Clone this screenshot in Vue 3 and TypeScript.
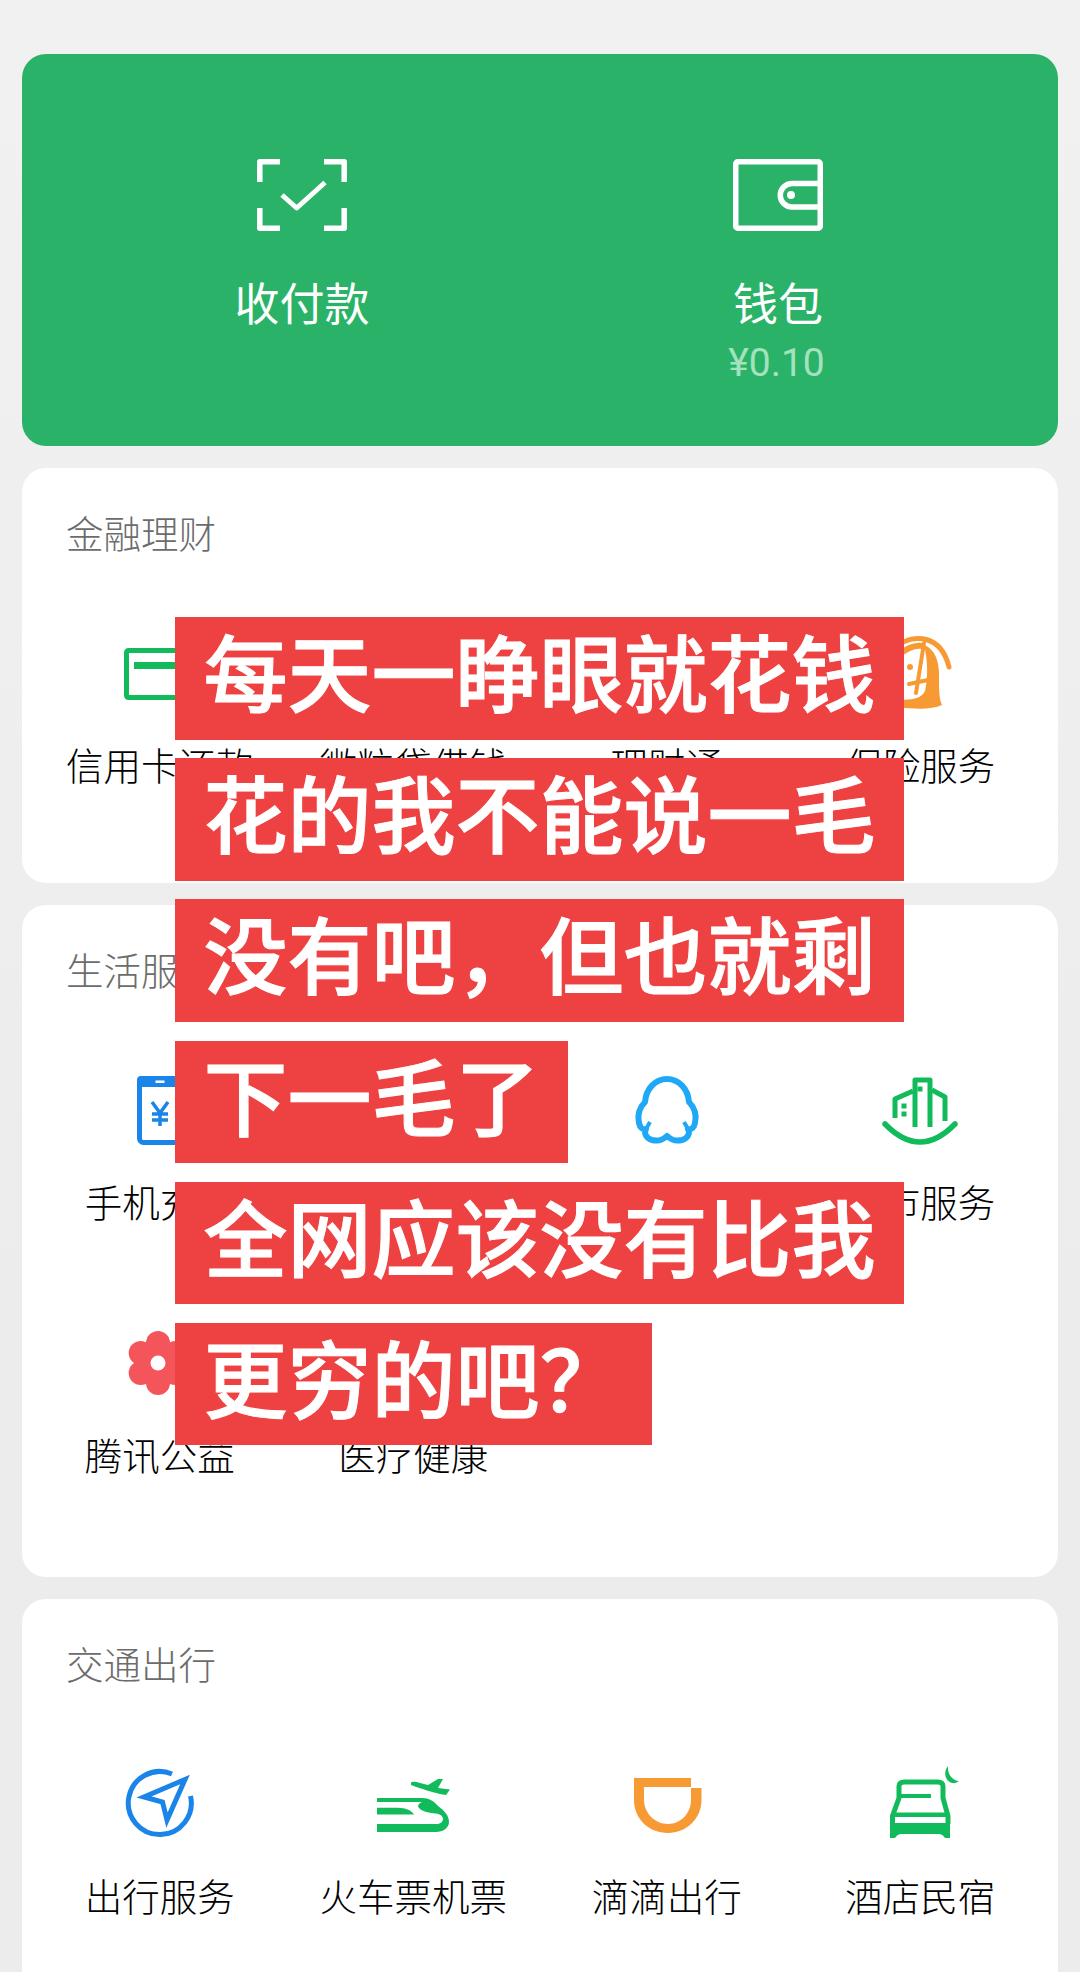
<script setup lang="ts">
interface Item {
  label: string
  icon?: string
}

interface Group {
  title: string
  mod: string
  items: Item[]
}

const groups: Group[] = [
  {
    title: '金融理财',
    mod: 'finance',
    items: [
      { label: '信用卡还款', icon: 'card' },
      { label: '微粒贷借钱' },
      { label: '理财通' },
      { label: '保险服务', icon: 'insure' },
    ],
  },
  {
    title: '生活服务',
    mod: 'life',
    items: [
      { label: '手机充值', icon: 'phone' },
      { label: '生活缴费' },
      { label: 'Q币充值', icon: 'qq' },
      { label: '城市服务', icon: 'city' },
      { label: '腾讯公益', icon: 'flower' },
      { label: '医疗健康' },
    ],
  },
  {
    title: '交通出行',
    mod: 'travel',
    items: [
      { label: '出行服务', icon: 'nav' },
      { label: '火车票机票', icon: 'train' },
      { label: '滴滴出行', icon: 'didi' },
      { label: '酒店民宿', icon: 'bed' },
    ],
  },
]

const captions: string[] = [
  '每天一睁眼就花钱',
  '花的我不能说一毛',
  '没有吧\uFF0C但也就剩',
  '下一毛了',
  '全网应该没有比我',
  '更穷的吧\uFF1F',
]
</script>

<template>
  <div class="page">
    <section class="hero">
      <div class="hero-col">
        <svg class="hero-icon" viewBox="0 0 90 72" fill="none" stroke="#fff" stroke-width="5.5" stroke-linejoin="round">
          <path d="M2.8 23V2.8H23M67 2.8H87.2V23M2.8 49V69.2H23M67 69.2H87.2V49" />
          <path d="M25 36L39.7 49L68 23.5" stroke-width="5" />
        </svg>
        <div class="hero-label">收付款</div>
      </div>
      <div class="hero-col">
        <svg class="hero-icon" viewBox="0 0 90 72" fill="none" stroke="#fff" stroke-width="5.5" stroke-linejoin="round">
          <rect x="2.75" y="2.75" width="84.5" height="66.5" rx="2" />
          <path d="M85 24.5H59A11.75 11.75 0 0 0 59 48H85" />
          <circle cx="58" cy="36" r="4" fill="#fff" stroke="none" />
        </svg>
        <div class="hero-label">钱包</div>
        <div class="hero-amount">¥0.10</div>
      </div>
    </section>

    <section v-for="group in groups" :key="group.title" class="panel" :class="group.mod">
      <h2 class="panel-title">{{ group.title }}</h2>
      <div class="grid">
        <div v-for="item in group.items" :key="item.label" class="cell">
          <svg class="cell-icon" viewBox="0 0 90 80">
            <g v-if="item.icon === 'card'" fill="none" stroke="#11bb5b" stroke-width="5">
              <rect x="11.5" y="17.5" width="67" height="47" rx="2" />
              <path d="M19 32.5H71" stroke-width="7" />
            </g>
            <g v-else-if="item.icon === 'insure'" fill="none" stroke="#f79a33">
              <path d="M24 12C38 1 66 1 74 34" stroke-width="5" stroke-linecap="round" />
              <path d="M24 22Q36 11 48 13" stroke-width="6" />
              <path d="M49 12C60 16 64 28 64 42C64 56 64 66 67 72C56 77 40 76 20 74V66C35 68 46 66 50 58C53 45 53 28 49 12Z" fill="#f79a33" stroke="none" />
              <path d="M49 10L41 60" stroke-width="4" stroke-linecap="round" />
              <path d="M34 51L53 47" stroke-width="4" stroke-linecap="round" />
              <circle cx="35" cy="34" r="3" fill="#f79a33" stroke="none" />
            </g>
            <g v-else-if="item.icon === 'phone'">
              <rect x="24.5" y="8.5" width="41" height="64" rx="4" fill="#fff" stroke="#1a84e8" stroke-width="5" />
              <rect x="22" y="6" width="46" height="11" rx="4" fill="#1a84e8" />
              <rect x="40.5" y="10.5" width="9" height="2.5" fill="#fff" />
              <path d="M37 32L45 43L53 32M45 43V56M37 44H53M37 50H53" fill="none" stroke="#1a84e8" stroke-width="3.5" />
            </g>
            <g v-else-if="item.icon === 'qq'" fill="none" stroke="#1fa8f5" stroke-width="6" stroke-linejoin="round">
              <path d="M45 9C33 9 24 19 23 32C18 37 15 44 17 53C18 58 21 60 24 59C22 62 23 68 30 70C36 71.5 41 70 45 66C49 70 54 71.5 60 70C67 68 68 62 66 59C69 60 72 58 73 53C75 44 72 37 67 32C66 19 57 9 45 9Z" />
              <path d="M24 59L28 52M66 59L62 52" stroke-width="4" />
            </g>
            <g v-else-if="item.icon === 'city'" fill="none" stroke="#11bb5b" stroke-width="5" stroke-linejoin="round">
              <path d="M10 54Q45 90 80 54" stroke-width="5.5" stroke-linecap="round" />
              <path d="M40 57V10H55V57" />
              <path d="M20 48V29L38 21M57 20L70 27V51" />
              <path d="M42.5 16.5h5v5h-5zM26.5 33.5h5v5h-5zM26.5 41.5h5v5h-5z" fill="#11bb5b" stroke="none" />
            </g>
            <g v-else-if="item.icon === 'flower'" fill="#f4555a">
              <circle cx="43" cy="40" r="20" />
              <circle cx="43" cy="20" r="12" />
              <circle cx="43" cy="60" r="12" />
              <circle cx="25.7" cy="30" r="12" />
              <circle cx="25.7" cy="50" r="12" />
              <circle cx="60.3" cy="30" r="12" />
              <circle cx="60.3" cy="50" r="12" />
              <circle cx="43" cy="40" r="7.5" fill="#fff" />
            </g>
            <g v-else-if="item.icon === 'nav'" fill="none" stroke="#1a84e8" stroke-width="5">
              <path d="M57 10A31.5 31.5 0 1 0 75.5 32" />
              <path d="M70 15.5L29 33L47.5 38L52 56Z" stroke-linejoin="miter" />
            </g>
            <g v-else-if="item.icon === 'train'" fill="#11bb5b">
              <path d="M9 34H54C61 34 66 37 70 42C77 47 81 52 81 58C81 64 75 68 68 68H9V60H68C72 60 75 58 75 55C75 52 72 50 68 49.5C60 49 52 47 50 42.5C50 40 52 39 54 38H9Z" />
              <path d="M9 43.7H30C38 43.7 44 47 46 50.5H9Z" />
              <path d="M43 19C44 17 48 18 52 19L60 21L70 15H75L70 24L82 25.5L78 31C72 30.5 50 24 43 21Z" />
            </g>
            <path
              v-else-if="item.icon === 'didi'"
              d="M12 14H69V23H22V36C22 49 33 60 46 60C59 60 69 49 69 36V24H79.5V36C79.5 55 64 69 46 69C27 69 12 55 12 36Z"
              fill="#f79a33"
            />
            <g v-else-if="item.icon === 'bed'" fill="#11bb5b">
              <path d="M73 2C68 8 70 17 77 19C80 19.5 82 18.5 84 17C78 17 72 10 73 2Z" />
              <path d="M17.5 60V52L24 34V22C24 19.5 26 18 29 18H63C66 18 68 19.5 68 22V34L73 52V60" fill="none" stroke="#11bb5b" stroke-width="5" />
              <path d="M25 30H56V34H25ZM18 48.5H72V53H18Z" />
              <path d="M15 59H75V74H70C68 71 66 70 64 70H26C24 70 22 71 20 74H15Z" />
            </g>
          </svg>
          <div class="cell-label">{{ item.label }}</div>
        </div>
      </div>
    </section>

    <div class="captions">
      <div v-for="line in captions" :key="line" class="caption">{{ line }}</div>
    </div>
  </div>
</template>

<style>
html,
body {
  margin: 0;
  background: #eeeeee;
}
</style>

<style scoped>
.page {
  position: relative;
  box-sizing: border-box;
  height: 1972px;
  overflow: hidden;
  padding: 54px 22px 0;
  display: flex;
  flex-direction: column;
  gap: 22px;
  background: linear-gradient(#f1f1f1, #ececec 70%);
  font-family: "Noto Sans CJK SC", "Noto Sans", sans-serif;
}

.hero {
  flex: none;
  display: grid;
  grid-template-columns: 1fr 1fr;
  padding: 105px 42px 58px;
  border-radius: 24px;
  background: #2ab368;
  color: #fff;
}

.hero-col {
  display: flex;
  flex-direction: column;
  align-items: center;
}

.hero-icon {
  width: 90px;
  height: 72px;
}

.hero-label {
  margin-top: 41px;
  margin-bottom: 2px;
  font-size: 45px;
  font-weight: 400;
  line-height: 60px;
}

.hero-amount {
  margin: 4px 3px 0 0;
  font-family: Roboto, sans-serif;
  font-size: 39px;
  line-height: 50px;
  color: #a3e2bd;
}

.panel {
  flex: none;
  padding: 42px 11px 95px;
  border-radius: 24px;
  background: #fff;
}

.panel.life {
  padding-bottom: 99px;
}

.panel-title {
  margin: 0 0 79px 33px;
  font-size: 37.5px;
  font-weight: 300;
  line-height: 44px;
  color: #6c6c6c;
}

.grid {
  display: grid;
  grid-template-columns: repeat(4, 1fr);
  row-gap: 98px;
}

.cell {
  display: flex;
  flex-direction: column;
  align-items: center;
}

.cell-icon {
  width: 90px;
  height: 80px;
}

.cell-label {
  margin: 29px 0 2px;
  font-size: 37.5px;
  font-weight: 300;
  line-height: 44px;
  color: #000;
  white-space: nowrap;
}

.captions {
  position: absolute;
  top: 617px;
  left: 175px;
  display: flex;
  flex-direction: column;
  align-items: flex-start;
  gap: 18.7px;
}

.caption {
  height: 122.5px;
  padding: 0 28.5px;
  background: #ee4242;
  color: #fff;
  font-size: 84px;
  font-weight: 500;
  -webkit-text-stroke: 1px #fff;
  line-height: 106px;
  white-space: nowrap;
}
</style>
